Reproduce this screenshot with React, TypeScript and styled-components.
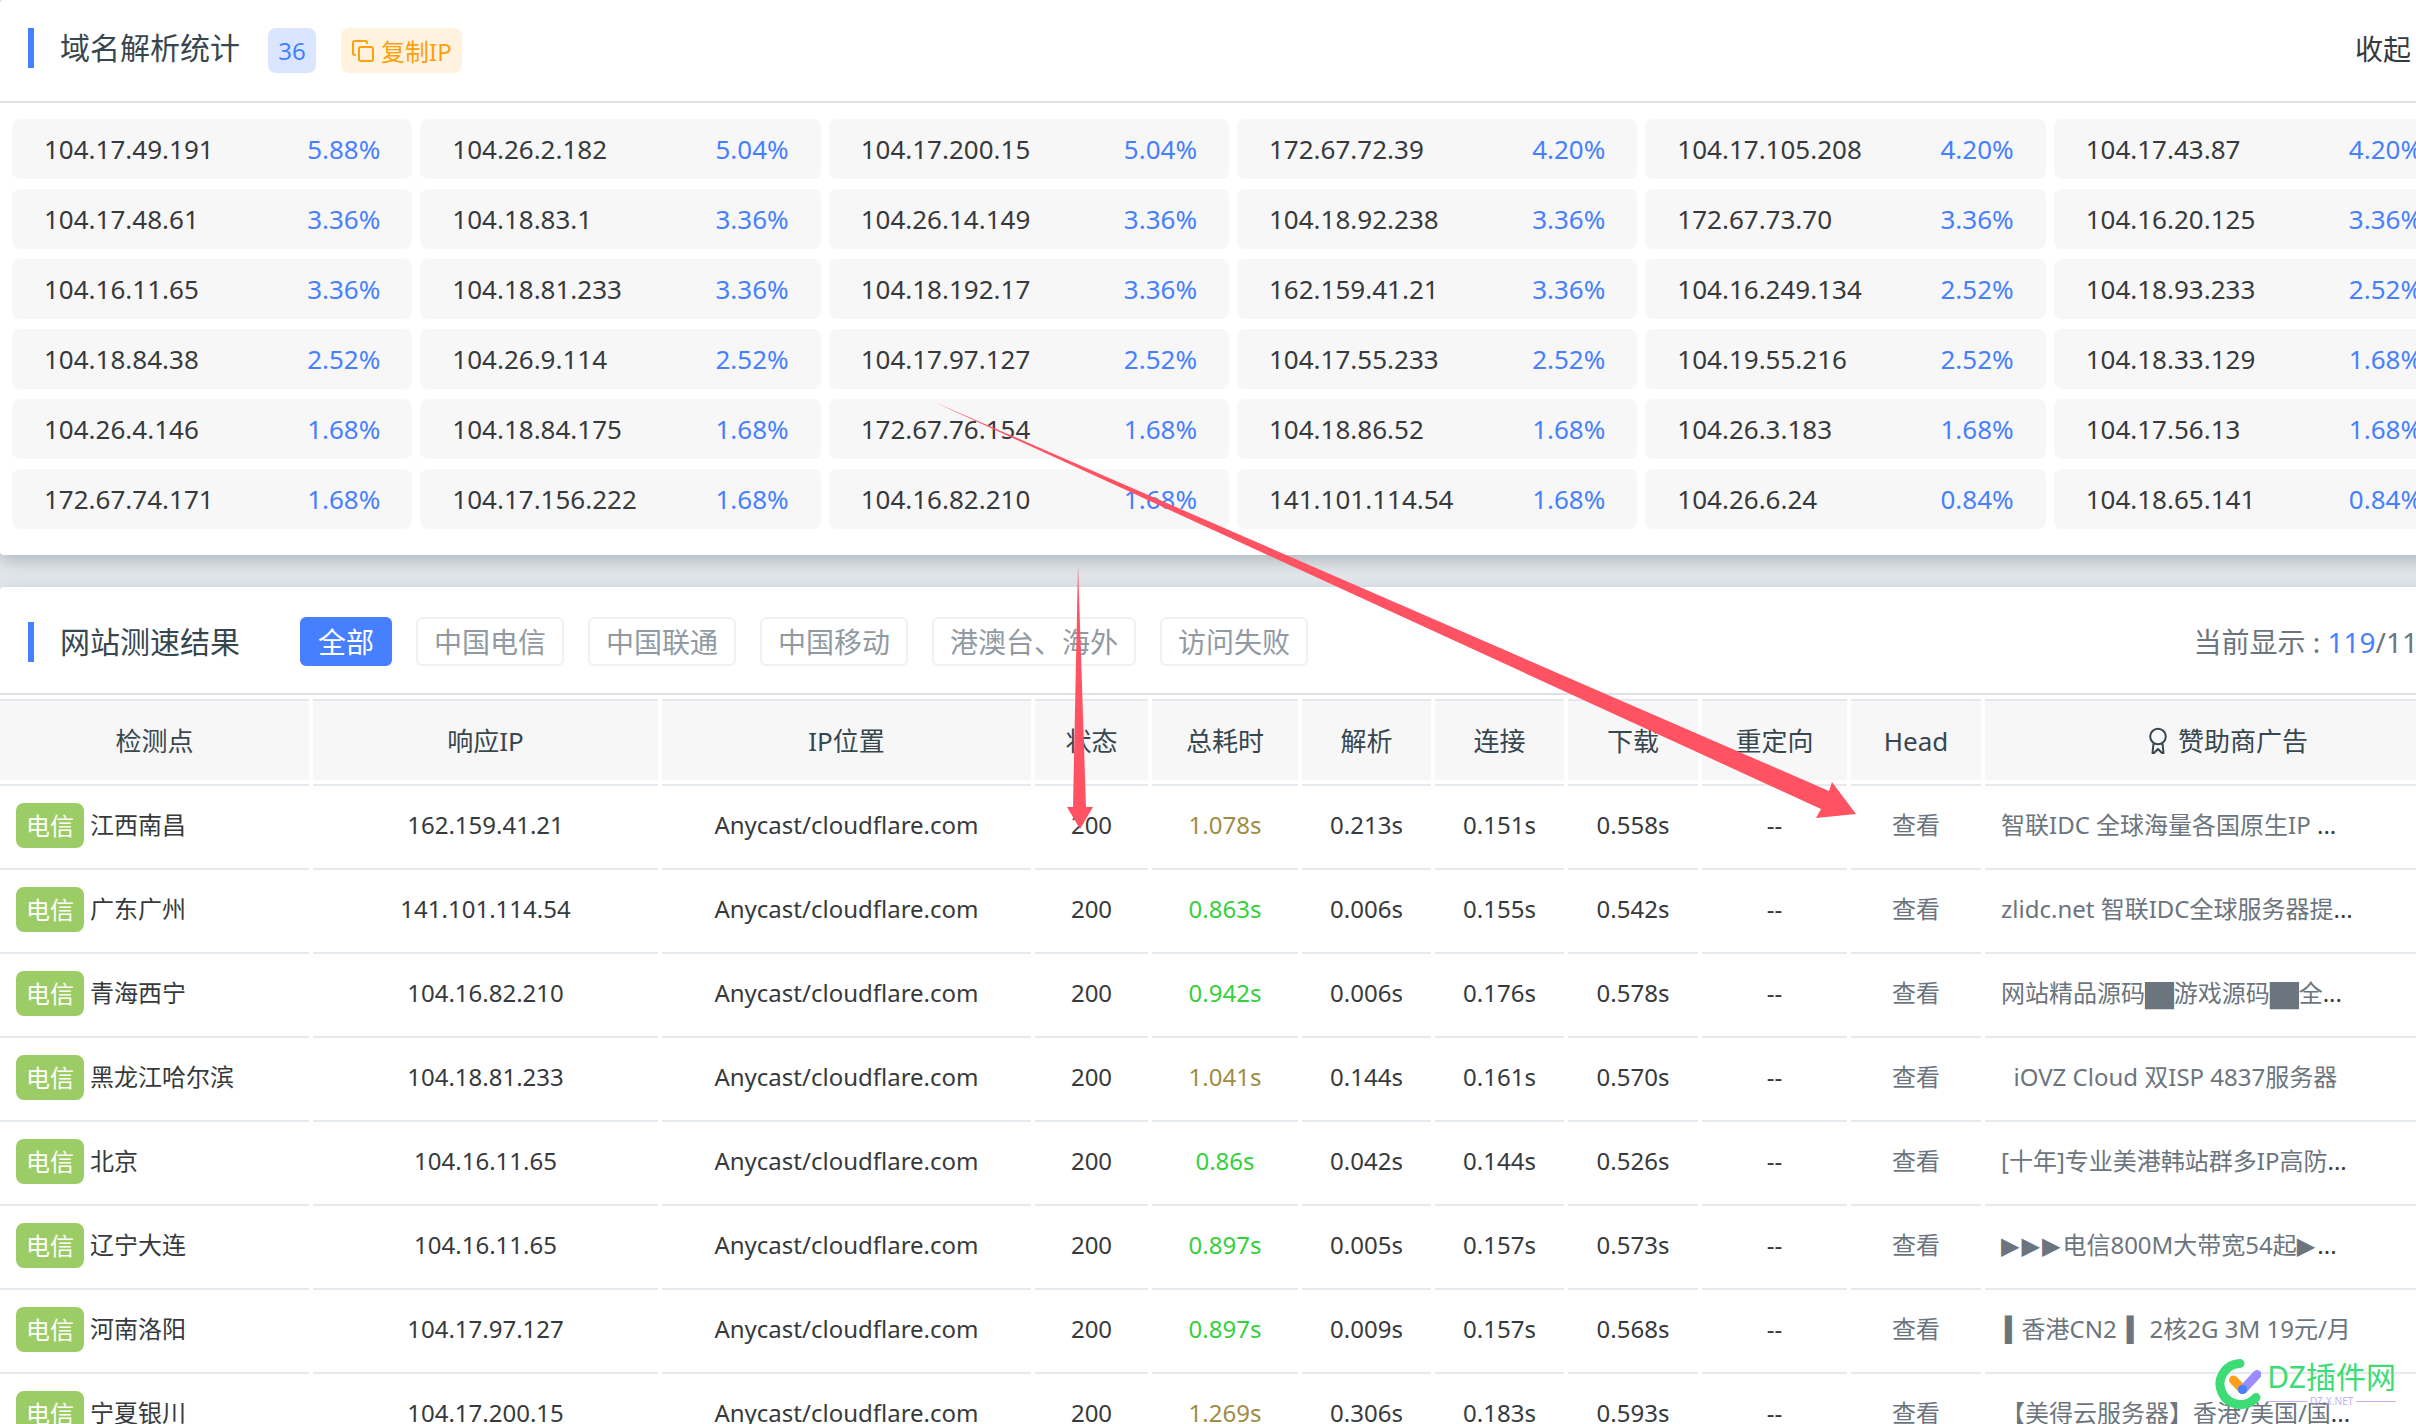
import React from "react";
import styled, { createGlobalStyle } from "styled-components";
import { Copy } from "lucide-react";

const GlobalStyle = createGlobalStyle`
  * { box-sizing: border-box; }
  body {
    margin: 0;
    background: #e4e8ec;
    color: #373a3c;
    font-family: "Noto Sans", "Noto Sans CJK SC", sans-serif;
    font-size: 24px;
  }
  button { font-family: inherit; cursor: pointer; }
`;

const Page = styled.div`
  position: relative;
  height: 100vh;
  overflow: hidden;
`;

const Sheet = styled.main`
  width: calc(100% + 50px);
  display: flex;
  flex-direction: column;
  gap: 32px;
`;

const Panel = styled.section`
  background: #fff;
  border-radius: 4px;
  box-shadow: 0 6px 18px rgba(69, 90, 100, 0.34);
`;

const PanelHead = styled.header<{ $align: string; $pad: string }>`
  display: flex;
  align-items: ${(p) => p.$align};
  padding: ${(p) => p.$pad};
  border-bottom: 2px solid #dee2e6;
`;

const Title = styled.h2<{ $gap: number }>`
  display: flex;
  align-items: center;
  gap: 26px;
  margin: 0 ${(p) => p.$gap}px 0 0;
  color: #37474f;
  font-size: 30px;
  font-weight: 400;
  line-height: 40px;

  &::before {
    content: "";
    width: 6px;
    height: 40px;
    background: #4680ff;
  }
`;

const Count = styled.span`
  min-width: 48px;
  margin-right: 25px;
  border-radius: 8px;
  background: #dae6ff;
  color: #4680ff;
  line-height: 45px;
  text-align: center;
`;

const CopyButton = styled.button`
  display: flex;
  align-items: center;
  gap: 6px;
  height: 45px;
  padding: 0 10px;
  border: 0;
  border-radius: 8px;
  background: #fff3e0;
  color: #ff9f0a;
  font-size: 24px;
`;

const Collapse = styled.button`
  margin-left: auto;
  padding: 0;
  border: 0;
  background: none;
  color: #373a3c;
  font-size: 28px;
  line-height: 42px;
`;

const Stats = styled.ul`
  display: grid;
  grid-template-columns: repeat(6, 1fr);
  gap: 10px 8px;
  margin: 0;
  padding: 16px 12px 26px;
  list-style: none;
`;

const Stat = styled.li`
  display: flex;
  justify-content: space-between;
  padding: 0 32px;
  border-radius: 8px;
  background: #f7f7f7;
  font-size: 26px;
  line-height: 60px;
`;

const Blue = styled.span`
  color: #4680ff;
`;

const Filters = styled.div`
  display: flex;
  gap: 24px;
`;

const Filter = styled.button<{ $active: boolean }>`
  height: 49px;
  padding: 0 16px;
  border: 2px solid ${(p) => (p.$active ? "#4680ff" : "#f1f1f1")};
  border-radius: 6px;
  background: ${(p) => (p.$active ? "#4680ff" : "#fff")};
  color: ${(p) => (p.$active ? "#fff" : "#919aa3")};
  font-size: 28px;
  line-height: 44px;
`;

const Shown = styled.span`
  margin-left: auto;
  color: #6c757d;
  font-size: 28px;
  line-height: 40px;
  white-space: nowrap;
`;

const Table = styled.table`
  table-layout: fixed;
  width: calc(100% + 14px);
  margin: 0 -4px;
  border-collapse: separate;
  border-spacing: 4px;
`;

const Col = styled.col<{ $w?: number }>`
  width: ${(p) => (p.$w ? p.$w + "px" : "auto")};
`;

const Th = styled.th`
  height: 81px;
  padding: 0;
  border-top: 2px solid #e2e8ee;
  background: #f7f7f7;
  color: #37474f;
  font-size: 26px;
  font-weight: 400;
  line-height: 40px;
`;

const ThInner = styled.span`
  display: flex;
  align-items: center;
  justify-content: center;
  gap: 11px;
`;

const Td = styled.td<{ $left?: boolean; $color?: string }>`
  height: 80px;
  padding: 0 16px;
  border-top: 2px solid #e5eaef;
  color: ${(p) => p.$color || "#373a3c"};
  line-height: 40px;
  text-align: ${(p) => (p.$left ? "left" : "center")};
  white-space: nowrap;
`;

const Point = styled.div`
  display: flex;
  align-items: center;
  gap: 6px;
`;

const Carrier = styled.span`
  padding: 0 10px;
  border-radius: 8px;
  background: #9ccc65;
  color: #fff;
  line-height: 45px;
`;

const Link = styled.a`
  color: #6c757d;
  text-decoration: none;
`;

const Block = styled.span`
  background: currentColor;
  font-family: "Liberation Mono", monospace;
  line-height: 24px;
`;

const Triangle = styled.span`
  margin-right: 2px;
  font-family: "DejaVu Sans", sans-serif;
  line-height: 24px;
`;

const Stripe = styled.span`
  margin: 0 -2px 0 4px;
  font-family: "DejaVu Sans", sans-serif;
  line-height: 24px;
`;

const Arrows = styled.svg`
  position: absolute;
  top: 0;
  left: 0;
  pointer-events: none;
`;

const Watermark = styled.div`
  position: absolute;
  right: 20px;
  bottom: 14px;
  display: flex;
  gap: 6px;
  pointer-events: none;
`;

const MarkText = styled.div`
  display: flex;
  flex-direction: column;
  color: #3ddc76;
  font-size: 30px;
  line-height: 38px;
`;

const MarkSub = styled.div`
  display: flex;
  align-items: center;
  gap: 3px;
  color: #c0b0f5;
  font-size: 10px;
  line-height: 10px;

  &::before,
  &::after {
    content: "";
    flex: 1;
    height: 1px;
    background: #c9a9f0;
  }
`;

const stats: [string, string][] = [
  ["104.17.49.191", "5.88%"], ["104.26.2.182", "5.04%"], ["104.17.200.15", "5.04%"],
  ["172.67.72.39", "4.20%"], ["104.17.105.208", "4.20%"], ["104.17.43.87", "4.20%"],
  ["104.17.48.61", "3.36%"], ["104.18.83.1", "3.36%"], ["104.26.14.149", "3.36%"],
  ["104.18.92.238", "3.36%"], ["172.67.73.70", "3.36%"], ["104.16.20.125", "3.36%"],
  ["104.16.11.65", "3.36%"], ["104.18.81.233", "3.36%"], ["104.18.192.17", "3.36%"],
  ["162.159.41.21", "3.36%"], ["104.16.249.134", "2.52%"], ["104.18.93.233", "2.52%"],
  ["104.18.84.38", "2.52%"], ["104.26.9.114", "2.52%"], ["104.17.97.127", "2.52%"],
  ["104.17.55.233", "2.52%"], ["104.19.55.216", "2.52%"], ["104.18.33.129", "1.68%"],
  ["104.26.4.146", "1.68%"], ["104.18.84.175", "1.68%"], ["172.67.76.154", "1.68%"],
  ["104.18.86.52", "1.68%"], ["104.26.3.183", "1.68%"], ["104.17.56.13", "1.68%"],
  ["172.67.74.171", "1.68%"], ["104.17.156.222", "1.68%"], ["104.16.82.210", "1.68%"],
  ["141.101.114.54", "1.68%"], ["104.26.6.24", "0.84%"], ["104.18.65.141", "0.84%"],
];

const filters = ["全部", "中国电信", "中国联通", "中国移动", "港澳台、海外", "访问失败"];
const columns = ["检测点", "响应IP", "IP位置", "状态", "总耗时", "解析", "连接", "下载", "重定向", "Head"];
const widths = [309, 345, 369, 113, 146, 129, 129, 130, 145, 130];

type Row = {
  point: string;
  ip: string;
  total: string;
  dns: string;
  connect: string;
  download: string;
  ad: React.ReactNode;
  cut?: boolean;
};

const rows: Row[] = [
  { point: "江西南昌", ip: "162.159.41.21", total: "1.078s", dns: "0.213s", connect: "0.151s", download: "0.558s", ad: "智联IDC 全球海量各国原生IP ", cut: true },
  { point: "广东广州", ip: "141.101.114.54", total: "0.863s", dns: "0.006s", connect: "0.155s", download: "0.542s", ad: "zlidc.net 智联IDC全球服务器提", cut: true },
  { point: "青海西宁", ip: "104.16.82.210", total: "0.942s", dns: "0.006s", connect: "0.176s", download: "0.578s", ad: <>网站精品源码<Block>██</Block>游戏源码<Block>██</Block>全</>, cut: true },
  { point: "黑龙江哈尔滨", ip: "104.18.81.233", total: "1.041s", dns: "0.144s", connect: "0.161s", download: "0.570s", ad: "\u00a0\u00a0iOVZ Cloud 双ISP 4837服务器" },
  { point: "北京", ip: "104.16.11.65", total: "0.86s", dns: "0.042s", connect: "0.144s", download: "0.526s", ad: "[十年]专业美港韩站群多IP高防", cut: true },
  { point: "辽宁大连", ip: "104.16.11.65", total: "0.897s", dns: "0.005s", connect: "0.157s", download: "0.573s", ad: <><Triangle>▶</Triangle><Triangle>▶</Triangle><Triangle>▶</Triangle>电信800M大带宽54起<Triangle>▶</Triangle></>, cut: true },
  { point: "河南洛阳", ip: "104.17.97.127", total: "0.897s", dns: "0.009s", connect: "0.157s", download: "0.568s", ad: <><Stripe>▍</Stripe>香港CN2 <Stripe>▍</Stripe> 2核2G 3M 19元/月</> },
  { point: "宁夏银川", ip: "104.17.200.15", total: "1.269s", dns: "0.306s", connect: "0.183s", download: "0.593s", ad: "【美得云服务器】香港/美国/国", cut: true },
];

const totalColor = (t: string) => (parseFloat(t) > 1 ? "#a08d45" : "#36d03c");

const Ribbon = () => (
  <svg width="18" height="28" viewBox="0 0 18 28" fill="none" stroke="#37474f" strokeWidth="2" strokeLinejoin="round">
    <circle cx="9" cy="9.5" r="7.8" />
    <path d="M4.500 16.500L3.500 26H5L9 22L13 26H14.500L13.500 16.500" />
  </svg>
);

const Logo = () => (
  <svg width="46" height="52" viewBox="0 0 46 52" fill="none" strokeLinecap="round" strokeWidth="9">
    <path d="M25 5.500A20.500 20.500 0 1 0 41 39.500" stroke="#3ddc76" />
    <path d="M18.500 22l9 9.500" stroke="#ff9f1a" />
    <path d="M28 31.500l14-15" stroke="#9b8cff" />
    <circle cx="27.500" cy="31.500" r="4.600" fill="#4680ff" />
  </svg>
);

export default function App() {
  const [active, setActive] = React.useState(0);
  return (
    <Page>
      <GlobalStyle />
      <Sheet>
        <Panel>
          <PanelHead $align="flex-start" $pad="28px 55px 28px 28px">
            <Title $gap={28}>域名解析统计</Title>
            <Count>36</Count>
            <CopyButton type="button">
              <Copy size={24} strokeWidth={2} />
              复制IP
            </CopyButton>
            <Collapse type="button">收起</Collapse>
          </PanelHead>
          <Stats>
            {stats.map(([ip, share]) => (
              <Stat key={ip}>
                <span>{ip}</span>
                <Blue>{share}</Blue>
              </Stat>
            ))}
          </Stats>
        </Panel>
        <Panel>
          <PanelHead $align="center" $pad="30px 32px 27px 28px">
            <Title $gap={60}>网站测速结果</Title>
            <Filters>
              {filters.map((f, i) => (
                <Filter key={f} type="button" $active={i === active} onClick={() => setActive(i)}>
                  {f}
                </Filter>
              ))}
            </Filters>
            <Shown>
              当前显示 : <Blue>119</Blue>/119
            </Shown>
          </PanelHead>
          <Table>
            <colgroup>
              {widths.map((w, i) => (
                <Col key={i} $w={w} />
              ))}
              <Col />
            </colgroup>
            <thead>
              <tr>
                {columns.map((c) => (
                  <Th key={c} scope="col">{c}</Th>
                ))}
                <Th scope="col">
                  <ThInner>
                    <Ribbon />
                    赞助商广告
                  </ThInner>
                </Th>
              </tr>
            </thead>
            <tbody>
              {rows.map((r) => (
                <tr key={r.point}>
                  <Td $left>
                    <Point>
                      <Carrier>电信</Carrier>
                      {r.point}
                    </Point>
                  </Td>
                  <Td>{r.ip}</Td>
                  <Td>Anycast/cloudflare.com</Td>
                  <Td>200</Td>
                  <Td $color={totalColor(r.total)}>{r.total}</Td>
                  <Td>{r.dns}</Td>
                  <Td>{r.connect}</Td>
                  <Td>{r.download}</Td>
                  <Td>--</Td>
                  <Td>
                    <Link href="#head">查看</Link>
                  </Td>
                  <Td $left>
                    <Link href="#ad">{r.ad}</Link>
                    {r.cut && "..."}
                  </Td>
                </tr>
              ))}
            </tbody>
          </Table>
        </Panel>
      </Sheet>
      <Arrows width="1900" height="900" viewBox="0 0 1900 900" fill="#ff5263" aria-hidden="true">
        <path d="M932 401L1829 791L1832 782L1856 814L1816 818L1821 809Z" />
        <path d="M1078 565L1086 807H1093L1080 829L1067 807H1073Z" />
      </Arrows>
      <Watermark>
        <Logo />
        <MarkText>
          DZ插件网
          <MarkSub>DZ-X.NET</MarkSub>
        </MarkText>
      </Watermark>
    </Page>
  );
}
